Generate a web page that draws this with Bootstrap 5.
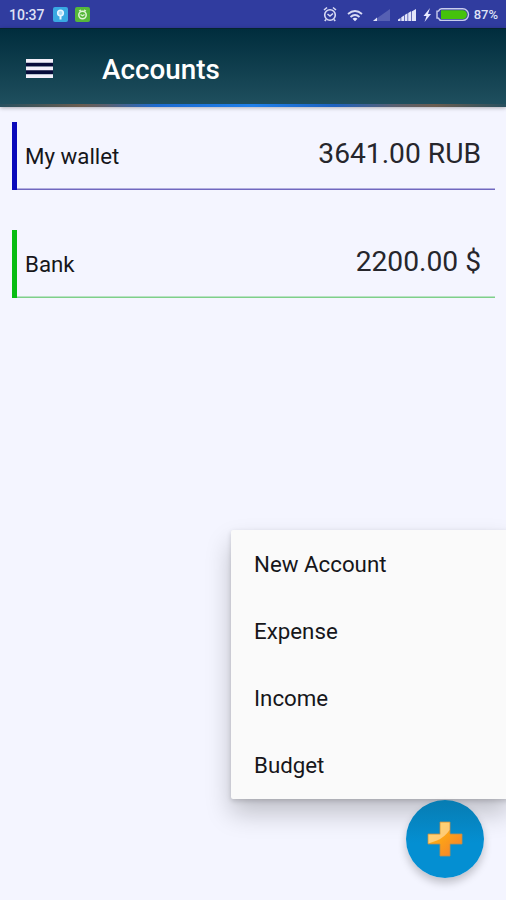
<!DOCTYPE html>
<html lang="en">
<head>
<meta charset="utf-8">
<meta name="viewport" content="width=device-width, initial-scale=1">
<title>Accounts</title>
<link href="https://cdn.jsdelivr.net/npm/bootstrap@5.3.0/dist/css/bootstrap.min.css" rel="stylesheet">
<style>
body{font-family:Roboto,"Liberation Sans",sans-serif;background:#f4f5ff;color:#16161a}
.screen{height:900px;overflow:hidden}
.statusbar{height:28px;background:#303c9f;color:#dfe1f5;font-size:14px;font-weight:500;line-height:28px;padding:1px 8px 0 9px}
.statusbar svg{display:block}
.clock{width:37px}
.tray-icon{margin-left:7px}
.charge{font-size:13px;margin-left:3px}
.appbar{height:79px;background:linear-gradient(#002d3d,#20505f);border-top:1px solid #04252e;box-shadow:0 1px 4px rgba(0,0,0,.3);padding:2px 0 0 26px}
.appbar::after{content:"";position:absolute;left:0;right:0;bottom:0;height:3px;background:linear-gradient(90deg,#28505f 0,#6b5d50 16%,#5a6070 21%,#1e6bd0 31%,#2080ea 50%,#1e62c0 66%,#5a6070 78%,#6b5d50 86%,#28505f 100%)}
.appbar h1{font-size:27.8px;font-weight:500;line-height:34px;margin:2px 0 0 49px}
.accounts{padding:15px 11px 0 12px}
.account{height:68px;border-left:5px solid var(--tone);box-shadow:inset 0 -1.5px 0 var(--rule);padding:0 14px 0 8px;margin-bottom:40px}
.wallet{--tone:#0a0abb;--rule:#7068c0}
.bank{--tone:#07bd12;--rule:#7ed08a}
.account-name{font-size:22.3px;line-height:68px}
.account-sum{font-size:28.2px;line-height:63px;color:#26262c}
.action-menu{left:231px;top:530px;width:278px;height:269px;padding-top:1px;background:#fafafa;border-radius:2px;box-shadow:0 14px 26px rgba(0,0,0,.22),0 2px 5px rgba(0,0,0,.16);z-index:2}
.action-menu a{height:67.4px;line-height:67px;padding-left:23px;font-size:22.3px;color:#16161a}
.fab{left:406px;top:800px;width:78px;height:78px;background:linear-gradient(#077cb2,#048fd2 55%);box-shadow:0 5px 9px rgba(0,0,0,.22);z-index:3}
</style>
</head>
<body>
<div class="screen position-relative d-flex flex-column">
  <div class="statusbar d-flex align-items-center">
    <span class="clock">10:37</span>
    <svg class="tray-icon" width="15" height="15" viewBox="0 0 15 15"><rect width="15" height="15" rx="2" fill="#39a9e2"/><circle cx="7.5" cy="6" r="2.800" fill="#a5dcf5" stroke="#e8f6ff" stroke-width="1.6"/><path d="M7.500 8.500v4" stroke="#e8f6ff" stroke-width="2"/></svg>
    <svg class="tray-icon" width="15" height="15" viewBox="0 0 15 15"><rect width="15" height="15" rx="2" fill="#55b83a"/><circle cx="7.5" cy="8" r="3.7" fill="none" stroke="#dff5d8" stroke-width="1.5"/><path d="M4 4l2-1M9 3l2 1M5.500 7.500l2 1.300 2-1.300" fill="none" stroke="#dff5d8" stroke-width="1.2"/></svg>
    <svg class="ms-auto" width="149" height="20" viewBox="0 0 149 20" fill="none">
      <g stroke="#d9dcf5" stroke-width="1.6"><circle cx="8" cy="10" r="5.3"/><path d="M2 5l3-2.500M11 2.500l3 2.500M5.500 9l2.500 2 3-2.500M4 14.500l-1.200 1.500M12 14.500l1.200 1.500"/></g>
      <path d="M26 9q7-6 14 0" stroke="#d9dcf5" stroke-width="1.8"/><path d="M28.500 12q4.500-4 9 0" stroke="#d9dcf5" stroke-width="1.8"/><path d="M30.500 13.700q2.500-2 5 0L33 16.300z" fill="#e8eaff"/>
      <path d="M51 16L68 4v12z" fill="#5660b3"/><path d="M51 16l4-3.500V16z" fill="#e3e5fa"/>
      <path d="M76 16h2.500v-3L76 14.500zM79.300 16H82v-5.500l-2.700 1.700zM82.700 16h2.800V8.300L82.700 10zM86.200 16H89V6.200L86.200 8zM89.700 16H94V4l-4.300 2.500z" fill="#e3e5fa"/>
      <path d="M108 3l-6.500 8h3l-2 6 6.500-8h-3z" fill="#e8eaff"/>
      <path d="M119.500 3.800h21.200a5.800 5.800 0 0 1 0 11.600h-21.200q-2 0-3-2.300h-1.500V6.100h1.500q1-2.300 3-2.300z" stroke="#c9cdec" stroke-width="1.4"/><path d="M119 5.300h21.700a4.300 4.300 0 0 1 0 8.600H119z" fill="#45c20c"/>
    </svg>
    <span class="charge">87%</span>
  </div>

  <header class="appbar position-relative d-flex align-items-center text-white">
    <svg width="27" height="20" viewBox="0 0 27 20" aria-label="Menu"><path d="M0 3.500h27v4H0zM0 11h27v4H0z" fill="#070b3a"/><path d="M0 0h27v3.700H0zM0 7.600h27v3.700H0zM0 15.300h27V19H0z" fill="#f3effa"/></svg>
    <h1>Accounts</h1>
  </header>

  <main class="accounts">
    <div class="account wallet d-flex justify-content-between">
      <span class="account-name">My wallet</span><span class="account-sum">3641.00 RUB</span>
    </div>
    <div class="account bank d-flex justify-content-between">
      <span class="account-name">Bank</span><span class="account-sum">2200.00 $</span>
    </div>
  </main>

  <nav class="action-menu position-absolute d-flex flex-column">
    <a class="text-decoration-none" href="#">New Account</a>
    <a class="text-decoration-none" href="#">Expense</a>
    <a class="text-decoration-none" href="#">Income</a>
    <a class="text-decoration-none" href="#">Budget</a>
  </nav>
  <button class="fab btn position-absolute rounded-circle border-0 p-0 d-flex align-items-center justify-content-center" aria-label="Add">
    <svg width="36" height="36" viewBox="0 0 36 36">
      <defs><linearGradient id="orange" x1="0" y1="0" x2="1" y2="1"><stop offset=".3" stop-color="#ffae10"/><stop offset=".9" stop-color="#f5822b"/></linearGradient></defs>
      <path d="M13 1h10v12h12v10H23v12H13V23H1V13h12z" fill="url(#orange)" stroke="#b98d52" stroke-width=".8"/>
      <path d="M13.400 1.400h9.200V9Q18 16 10 19.500L1.400 22.500v-9h12z" fill="#fff" opacity=".42"/>
    </svg>
  </button>
</div>
<script src="https://cdn.jsdelivr.net/npm/bootstrap@5.3.0/dist/js/bootstrap.bundle.min.js"></script>
</body>
</html>
